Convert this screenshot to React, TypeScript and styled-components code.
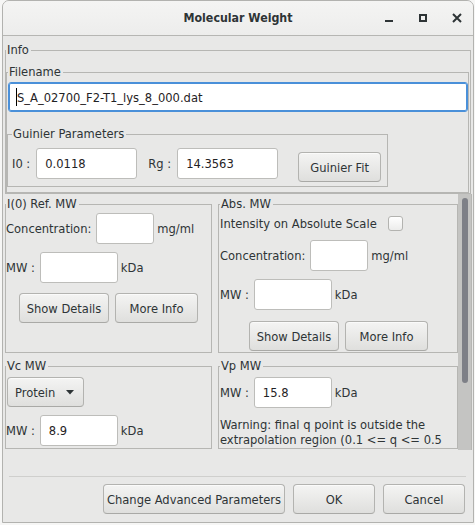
import React from "react";
import styled, { createGlobalStyle } from "styled-components";

const FONT = `"DejaVu Sans Condensed", "DejaVu Sans", sans-serif`;
const TEXT = "#2e3436";
const LINE = "#b6b6b3";
const SIZE = "12.8px";

const GlobalStyle = createGlobalStyle`
  html, body { margin: 0; padding: 0; background: #f6f6f5; }
  body {
    font-family: ${FONT};
    font-stretch: condensed;
    font-size: ${SIZE};
    color: ${TEXT};
  }
  * { box-sizing: border-box; }
`;

const Window = styled.div`
  margin-left: 2px;
  width: 472px;
  height: 523px;
  border: 1px solid #b2b2af;
  border-radius: 7px 7px 0 0;
  background: #e8e8e7;
  display: flex;
  flex-direction: column;
  overflow: hidden;
`;

const Header = styled.header`
  flex: none;
  height: 35px;
  border-bottom: 1px solid ${LINE};
  background: linear-gradient(#f4f4f3, #ededec);
  display: grid;
  grid-template-columns: 1fr auto 1fr;
  align-items: center;
`;

const Title = styled.h1`
  grid-column: 2;
  margin: 0;
  font-size: 12.3px;
  font-weight: bold;
  color: ${TEXT};
`;

const Controls = styled.div`
  grid-column: 3;
  justify-self: end;
  display: flex;
  margin-right: -1px;
`;

const ControlButton = styled.div`
  width: 34px;
  height: 34px;
  display: flex;
  align-items: center;
  justify-content: center;
  color: ${TEXT};
`;

const Body = styled.main`
  flex: 1;
  display: flex;
  flex-direction: column;
  padding-top: 6px;
`;

const Group = styled.fieldset`
  margin: 0;
  padding: 0;
  border: 1px solid ${LINE};
  min-width: 0;
`;

const Legend = styled.legend`
  padding: 0 2px 1px 1px;
  margin: 0;
  line-height: 15px;
  font-size: ${SIZE};
  color: ${TEXT};
`;

const InfoGroup = styled(Group)`
  margin: 0 2px;
  padding: 6px 1px 0 0;
`;

const FilenameGroup = styled(Group)`
  padding: 2px 0 0 1px;
`;

const GuinierGroup = styled(Group)`
  margin: 14px 0 5px -1px;
  width: 381px;
  padding: 6px 0 3px 4px;
`;

const GuinierRow = styled.div`
  display: flex;
  align-items: flex-start;
  height: 35px;
`;

const FocusedEntry = styled.div`
  height: 30px;
  width: 100%;
  display: flex;
  align-items: center;
  padding-left: 7px;
  background: #fff;
  border: 1px solid #4a90d9;
  box-shadow: inset 0 0 0 1px #4a90d9;
  border-radius: 3px;
  color: #1f2224;
  white-space: nowrap;
`;

const Caret = styled.span`
  display: inline-block;
  width: 1px;
  height: 18px;
  background: #000;
`;

const Entry = styled.input<{ $w: number; $ml?: number }>`
  width: ${(p) => p.$w}px;
  height: 31px;
  margin: 0 0 0 ${(p) => p.$ml ?? 0}px;
  padding: 0 8px;
  font: inherit;
  font-stretch: condensed;
  color: #1f2224;
  background: #fff;
  border: 1px solid #bdbdba;
  border-radius: 3px;
  outline: none;
  flex: none;
`;

const FieldLabel = styled.span<{ $ml?: number }>`
  display: flex;
  align-items: center;
  height: 31px;
  margin-left: ${(p) => p.$ml ?? 0}px;
  white-space: nowrap;
`;

const Button = styled.button<{ $w: number; $ml?: number; $mt?: number }>`
  width: ${(p) => p.$w}px;
  height: 30px;
  margin: ${(p) => p.$mt ?? 0}px 0 0 ${(p) => p.$ml ?? 0}px;
  padding: 0;
  flex: none;
  font: inherit;
  font-stretch: condensed;
  color: ${TEXT};
  background: linear-gradient(#f4f4f3, #dfdfdd);
  border: 1px solid #b3b3b0;
  border-bottom-color: #a9a9a6;
  border-radius: 4px;
  box-shadow: inset 0 1px 0 rgba(255, 255, 255, 0.6);
  white-space: nowrap;
`;

const DropButton = styled(Button)`
  display: flex;
  align-items: center;
  justify-content: space-between;
  padding: 0 9px 0 7px;
`;

const ScrollArea = styled.div`
  margin-left: 2px;
  width: 467px;
  height: 256px;
  display: flex;
  overflow: hidden;
  border-right: 1px solid ${LINE};
  flex: none;
`;

const Panels = styled.div`
  display: grid;
  grid-template-columns: 207px 240px;
  column-gap: 6px;
  row-gap: 5px;
  align-content: start;
  padding-top: 2px;
  width: 453px;
  flex: none;
`;

const Panel = styled(Group)<{ $pl: number }>`
  padding: 0 0 1px ${(p) => p.$pl}px;
  display: flex;
  flex-direction: column;
  align-items: flex-start;
`;

const Row = styled.div<{ $mt: number }>`
  display: flex;
  align-items: center;
  gap: 5px;
  margin-top: ${(p) => p.$mt}px;
`;

const ButtonRow = styled.div<{ $mt: number }>`
  align-self: stretch;
  display: flex;
  justify-content: center;
  gap: 6px;
  margin-top: ${(p) => p.$mt}px;
`;

const Unit = styled.span`
  margin-left: -2px;
`;

const CheckBox = styled.span`
  width: 15px;
  height: 15px;
  margin-left: 6px;
  border: 1px solid #b3b3b0;
  border-radius: 3px;
  background: linear-gradient(#ffffff, #ececeb);
`;

const Warning = styled.p`
  margin: 9px 0 0 0;
  line-height: 15px;
  width: 236px;
`;

const Scrollbar = styled.div`
  width: 13px;
  flex: none;
  background: #c4c4c2;
  padding: 4px 3px 0 4px;
`;

const Thumb = styled.div`
  width: 6px;
  height: 185px;
  border-radius: 3px;
  background: #7e8087;
`;

const Separator = styled.hr`
  margin: 26px 7px 0 6px;
  border: none;
  height: 1px;
  background: #cfcfcd;
`;

const ActionBar = styled.div`
  display: flex;
  justify-content: flex-end;
  gap: 8px;
  padding-right: 8px;
  margin-top: 7px;
`;

export default function App() {
  return (
    <>
      <GlobalStyle />
      <Window>
        <Header>
          <Title>Molecular Weight</Title>
          <Controls>
            <ControlButton aria-label="Minimize">
              <svg width="16" height="16" viewBox="0 0 16 16">
                <rect x="4" y="10" width="8" height="2" fill="currentColor" />
              </svg>
            </ControlButton>
            <ControlButton aria-label="Maximize">
              <svg width="16" height="16" viewBox="0 0 16 16">
                <rect x="5" y="5" width="6" height="6" fill="none" stroke="currentColor" strokeWidth="2" />
              </svg>
            </ControlButton>
            <ControlButton aria-label="Close">
              <svg width="16" height="16" viewBox="0 0 16 16">
                <path d="M4 4 L12 12 M12 4 L4 12" stroke="currentColor" strokeWidth="2" />
              </svg>
            </ControlButton>
          </Controls>
        </Header>
        <Body>
          <InfoGroup>
            <Legend>Info</Legend>
            <FilenameGroup>
              <Legend>Filename</Legend>
              <FocusedEntry>
                <Caret />
                S_A_02700_F2-T1_lys_8_000.dat
              </FocusedEntry>
              <GuinierGroup>
                <Legend>Guinier Parameters</Legend>
                <GuinierRow>
                  <FieldLabel>I0 :</FieldLabel>
                  <Entry $w={101} $ml={6} value="0.0118" readOnly />
                  <FieldLabel $ml={11}>Rg :</FieldLabel>
                  <Entry $w={101} $ml={6} value="14.3563" readOnly />
                  <Button $w={83} $ml={20} $mt={4}>Guinier Fit</Button>
                </GuinierRow>
              </GuinierGroup>
            </FilenameGroup>
          </InfoGroup>

          <ScrollArea>
            <Panels>
              <Panel $pl={0}>
                <Legend>I(0) Ref. MW</Legend>
                <Row $mt={1}>
                  <span>Concentration:</span>
                  <Entry $w={58} readOnly />
                  <Unit>mg/ml</Unit>
                </Row>
                <Row $mt={8}>
                  <span>MW :</span>
                  <Entry $w={78} readOnly />
                  <Unit>kDa</Unit>
                </Row>
                <ButtonRow $mt={10}>
                  <Button $w={90}>Show Details</Button>
                  <Button $w={83}>More Info</Button>
                </ButtonRow>
              </Panel>

              <Panel $pl={1}>
                <Legend>Abs. MW</Legend>
                <Row $mt={4}>
                  <span>Intensity on Absolute Scale</span>
                  <CheckBox />
                </Row>
                <Row $mt={9}>
                  <span>Concentration:</span>
                  <Entry $w={58} readOnly />
                  <Unit>mg/ml</Unit>
                </Row>
                <Row $mt={8}>
                  <span>MW :</span>
                  <Entry $w={78} readOnly />
                  <Unit>kDa</Unit>
                </Row>
                <ButtonRow $mt={11}>
                  <Button $w={90}>Show Details</Button>
                  <Button $w={83}>More Info</Button>
                </ButtonRow>
              </Panel>

              <Panel $pl={0}>
                <Legend>Vc MW</Legend>
                <DropButton $w={77} $ml={1} $mt={3}>
                  <span>Protein</span>
                  <svg width="8" height="5" viewBox="0 0 8 5">
                    <path d="M0 0 L8 0 L4 4.5 Z" fill={TEXT} />
                  </svg>
                </DropButton>
                <Row $mt={8}>
                  <span>MW :</span>
                  <Entry $w={78} value="8.9" readOnly />
                  <Unit>kDa</Unit>
                </Row>
              </Panel>

              <Panel $pl={1}>
                <Legend>Vp MW</Legend>
                <Row $mt={3}>
                  <span>MW :</span>
                  <Entry $w={78} value="15.8" readOnly />
                  <Unit>kDa</Unit>
                </Row>
                <Warning>
                  Warning: final q point is outside the extrapolation region (0.1 &lt;= q &lt;= 0.5
                </Warning>
              </Panel>
            </Panels>
            <Scrollbar>
              <Thumb />
            </Scrollbar>
          </ScrollArea>

          <Separator />
          <ActionBar>
            <Button $w={182}>Change Advanced Parameters</Button>
            <Button $w={82}>OK</Button>
            <Button $w={82}>Cancel</Button>
          </ActionBar>
        </Body>
      </Window>
    </>
  );
}
